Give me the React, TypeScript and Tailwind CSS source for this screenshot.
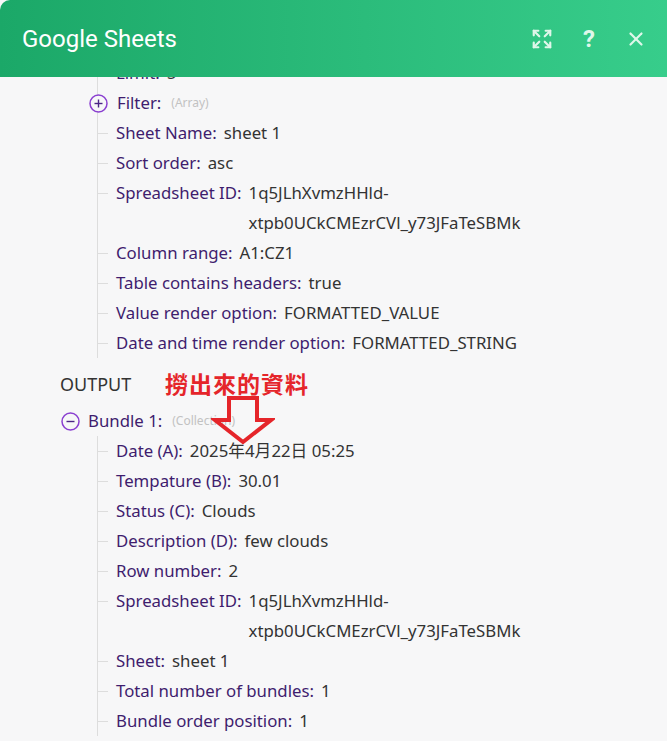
import { Expand, X } from "lucide-react";

type Row = { label: string; value?: string; value2?: string };

const inputRows: Row[] = [
  { label: "Sheet Name:", value: "sheet 1" },
  { label: "Sort order:", value: "asc" },
  { label: "Spreadsheet ID:", value: "1q5JLhXvmzHHld-", value2: "xtpb0UCkCMEzrCVl_y73JFaTeSBMk" },
  { label: "Column range:", value: "A1:CZ1" },
  { label: "Table contains headers:", value: "true" },
  { label: "Value render option:", value: "FORMATTED_VALUE" },
  { label: "Date and time render option:", value: "FORMATTED_STRING" },
];

const outputRows: Row[] = [
  { label: "Date (A):", value: "2025年4月22日 05:25" },
  { label: "Tempature (B):", value: "30.01" },
  { label: "Status (C):", value: "Clouds" },
  { label: "Description (D):", value: "few clouds" },
  { label: "Row number:", value: "2" },
  { label: "Spreadsheet ID:", value: "1q5JLhXvmzHHld-", value2: "xtpb0UCkCMEzrCVl_y73JFaTeSBMk" },
  { label: "Sheet:", value: "sheet 1" },
  { label: "Total number of bundles:", value: "1" },
  { label: "Bundle order position:", value: "1" },
];

function TreeRow({ label, value, value2 }: Row) {
  return (
    <div className="flex items-start leading-[30px]">
      <div className="mt-[15px] mr-[8px] h-px w-[10px] shrink-0 bg-[#dddddd]" />
      <span className="text-[#3f1d6e]">{label}</span>
      <div className="ml-[7px] flex flex-col text-[#333333]">
        <span>{value}</span>
        {value2 && <span>{value2}</span>}
      </div>
    </div>
  );
}

function Toggle({ open }: { open: boolean }) {
  return (
    <svg width="19" height="19" viewBox="0 0 19 19" className="shrink-0">
      <circle cx="9.5" cy="9.5" r="8.5" fill="#f7f7f8" stroke="#8a3fd0" strokeWidth="1.5" />
      <line x1="5.5" y1="9.5" x2="13.5" y2="9.5" stroke="#4b2585" strokeWidth="1.4" />
      {!open && <line x1="9.5" y1="5.5" x2="9.5" y2="13.5" stroke="#4b2585" strokeWidth="1.4" />}
    </svg>
  );
}

export default function App() {
  return (
    <div
      className="relative h-[741px] w-[667px] overflow-hidden bg-[#f7f7f8] text-[16.8px]"
      style={{ fontFamily: '"Noto Sans", "Noto Sans CJK TC", sans-serif' }}
    >
      <div className="relative z-10 flex h-[77px] items-center rounded-tl-[10px] bg-gradient-to-r from-[#1ba868] to-[#37cd8b] pl-[22px] pr-[20px]">
        <h1 className="text-[24px] text-white" style={{ fontFamily: "Roboto, sans-serif" }}>
          Google Sheets
        </h1>
        <div className="ml-auto flex items-center gap-[30px] text-[#dff7ea]">
          <Expand size={22} strokeWidth={2.4} />
          <span className="text-[24px] font-bold" style={{ fontFamily: "Roboto, sans-serif" }}>
            ?
          </span>
          <X size={22} strokeWidth={2.4} />
        </div>
      </div>

      <div className="h-[664px] overflow-hidden">
        <div className="-mt-[19px]">
          <div className="ml-[97px] border-l border-[#dddddd]">
            <TreeRow label="Limit:" value="5" />
            <div className="-ml-[9px] flex h-[30px] items-center">
              <Toggle open={false} />
              <span className="ml-[9px] text-[#3f1d6e]">Filter:</span>
              <span className="ml-[10px] text-[12px] text-[#c2c2c2]">(Array)</span>
            </div>
            {inputRows.map((r) => (
              <TreeRow key={r.label} {...r} />
            ))}
          </div>

          <div className="relative mt-[11px] flex h-[30px] items-center pl-[60px]">
            <span className="w-[105px] text-[18px] text-[#333333]">OUTPUT</span>
            <span className="text-[23px] font-bold tracking-[1px] text-[#e5252a]">
              撈出來的資料
            </span>
          </div>

          <div className="relative mt-[7px] flex h-[30px] items-center pl-[61px]">
            <Toggle open={true} />
            <span className="ml-[8px] text-[#3f1d6e]">Bundle 1:</span>
            <span className="ml-[10px] text-[12px] text-[#c2c2c2]">(Collection)</span>
            <svg
              width="64"
              height="50"
              viewBox="0 0 64 50"
              className="absolute left-[211px] top-[-10px]"
            >
              <path
                d="M18 2 H46 V24 H60 L32 46 L4 24 H18 Z"
                fill="none"
                stroke="#e5252a"
                strokeWidth="4"
                strokeLinejoin="miter"
              />
            </svg>
          </div>

          <div className="ml-[97px] border-l border-[#dddddd]">
            {outputRows.map((r) => (
              <TreeRow key={r.label} {...r} />
            ))}
          </div>
        </div>
      </div>
    </div>
  );
}
